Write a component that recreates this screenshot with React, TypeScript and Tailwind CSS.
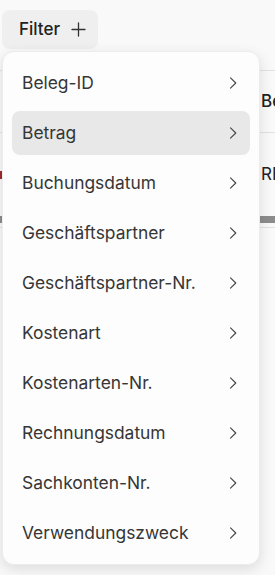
import React from "react";

const items = [
  "Beleg-ID",
  "Betrag",
  "Buchungsdatum",
  "Geschäftspartner",
  "Geschäftspartner-Nr.",
  "Kostenart",
  "Kostenarten-Nr.",
  "Rechnungsdatum",
  "Sachkonten-Nr.",
  "Verwendungszweck",
];

function Chevron() {
  return (
    <svg width="8" height="12" viewBox="0 0 8 12" fill="none" className="shrink-0">
      <path d="M1.5 0.8 L6.8 6 L1.5 11.2" stroke="#444" strokeWidth="1.1" strokeLinecap="round" strokeLinejoin="round" />
    </svg>
  );
}

export default function App() {
  return (
    <div
      className="relative w-[275px] h-[575px] overflow-hidden bg-[#f9f9f9] text-[#363636]"
      style={{ fontFamily: "Inter, 'Noto Sans', sans-serif" }}
    >
      {/* Toolbar */}
      <div className="pt-[10px] pl-[2px]">
        <button className="flex items-center gap-[11px] h-[39px] pl-[17px] pr-[12px] rounded-lg bg-[#efefef] text-[17px] font-medium text-[#222]">
          Filter
          <svg width="15" height="15" viewBox="0 0 15 15" fill="none">
            <path d="M7.5 1 V14 M1 7.5 H14" stroke="#333" strokeWidth="1.3" strokeLinecap="round" />
          </svg>
        </button>
      </div>

      {/* Table behind the menu */}
      <div className="mt-[21px] border-t border-[#e2e2e2] w-[275px]">
        <div className="h-[62px] flex items-center pl-[261px] border-b border-[#e2e2e2] text-[17px] font-medium text-[#222] whitespace-nowrap">
          Be
        </div>
        <div className="h-[83px] flex items-center justify-between text-[17px] text-[#222] whitespace-nowrap">
          <div className="w-[2px] h-[8px] bg-[#9b2c2c]" />
          <span className="w-[14px] overflow-hidden">RE</span>
        </div>
        <div className="h-[7px] bg-[#8c8c8c]" />
        <div className="h-[5px] border-b border-[#e2e2e2]" />
      </div>

      {/* Dropdown menu */}
      <div className="absolute left-[2px] top-[51px] w-[258px] rounded-xl bg-[#fdfdfd] border border-[#ececec] shadow-[0_4px_14px_rgba(0,0,0,0.12)] p-[9px] flex flex-col gap-[6px]">
        {items.map((label, i) => (
          <div
            key={label}
            className={`h-[44px] flex items-center justify-between pl-[10px] pr-[13px] rounded-lg text-[17.4px] ${
              i === 1 ? "bg-[#e8e8e8]" : ""
            }`}
          >
            <span>{label}</span>
            <Chevron />
          </div>
        ))}
      </div>
    </div>
  );
}
